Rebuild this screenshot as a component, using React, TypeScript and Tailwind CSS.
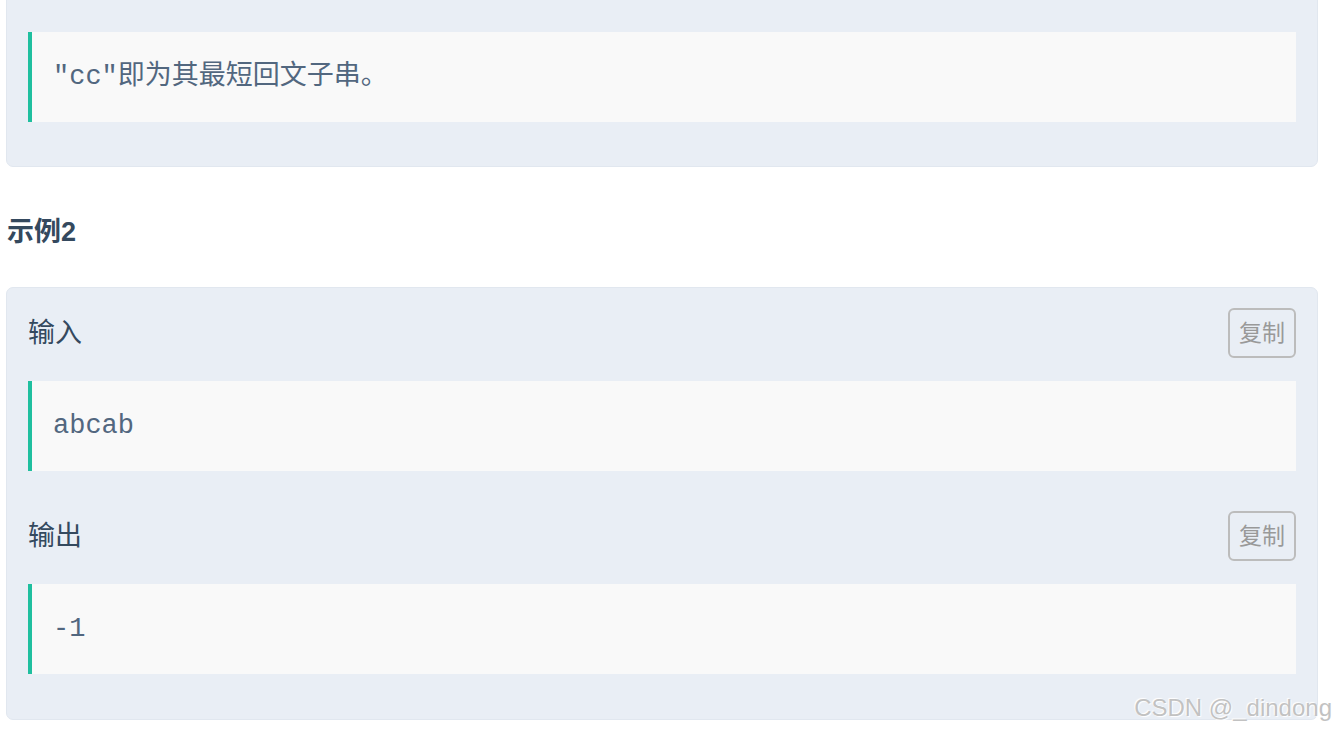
import React from "react";

const sans = { fontFamily: '"Liberation Sans", "Noto Sans CJK SC", sans-serif' };

function CopyButton() {
  return (
    <button
      type="button"
      className="flex h-[50px] w-[68px] items-center justify-center rounded-[6px] border-2 border-[#bcbcbc] text-[23px] leading-none text-[#999]"
    >
      复制
    </button>
  );
}

function Pre({ children }: { children: React.ReactNode }) {
  return (
    <div
      className="flex h-[90px] items-center border-l-4 border-[#1fbf9f] bg-[#f9f9f9] pl-[21px] text-[27px] leading-none text-[#52677f]"
      style={{ fontFamily: '"Liberation Mono", "Noto Sans CJK SC", monospace' }}
    >
      {children}
    </div>
  );
}

function Section({ label, value, first }: { label: string; value: string; first?: boolean }) {
  return (
    <div className={first ? "" : "mt-[40px]"}>
      <div className="flex h-[50px] items-center justify-between">
        <span className="text-[27px] leading-none text-[#34495e]">{label}</span>
        <CopyButton />
      </div>
      <div className="mt-[23px]">
        <Pre>{value}</Pre>
      </div>
    </div>
  );
}

export default function App() {
  return (
    <div className="relative h-[730px] w-[1336px] overflow-hidden bg-white" style={sans}>
      <div className="pl-[6px]" style={{ width: 1318 }}>
        <div className="-mt-[24px] rounded-[7px] border border-[#e1e7ef] bg-[#e9eef5] px-[21px] pb-[44px] pt-[55px]">
          <Pre>"cc"即为其最短回文子串。</Pre>
        </div>

        <h3 className="mb-[41px] mt-[52px] pl-[1px] text-[27px] font-bold leading-none text-[#34495e]">
          示例2
        </h3>

        <div className="rounded-[7px] border border-[#e1e7ef] bg-[#e9eef5] px-[21px] pb-[45px] pt-[20px]">
          <Section label="输入" value="abcab" first />
          <Section label="输出" value="-1" />
        </div>
      </div>

      <div
        className="absolute bottom-[10px] right-[4px] text-[24px] leading-none text-[#c2c2c2]"
        style={{ textShadow: "1px 1px 1px #ffffff, -1px -1px 1px #ffffff" }}
      >
        CSDN @_dindong
      </div>
    </div>
  );
}
